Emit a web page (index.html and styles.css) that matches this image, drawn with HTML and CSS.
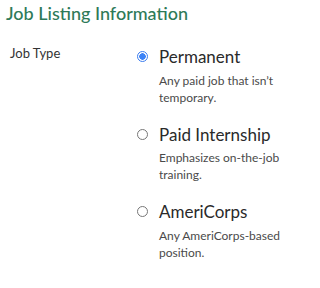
FILE: index.html
```html
<!DOCTYPE html>
<html>
<head>
<meta charset="utf-8">
<link rel="stylesheet" href="styles.css">
</head>
<body>
<h2 class="title">Job Listing Information</h2>
<div class="field">
  <div class="label">Job Type</div>
  <div class="options">
    <label class="option">
      <span class="radio checked"></span>
      <span class="text">
        <span class="name">Permanent</span>
        <span class="desc">Any paid job that isn’t temporary.</span>
      </span>
    </label>
    <label class="option">
      <span class="radio"></span>
      <span class="text">
        <span class="name">Paid Internship</span>
        <span class="desc">Emphasizes on-the-job training.</span>
      </span>
    </label>
    <label class="option">
      <span class="radio"></span>
      <span class="text">
        <span class="name">AmeriCorps</span>
        <span class="desc">Any AmeriCorps-based position.</span>
      </span>
    </label>
  </div>
</div>
</body>
</html>
```
FILE: styles.css
```css
body {
  margin: 0;
  background: #fff;
  font-family: "Lato", "Open Sans", sans-serif;
  color: #333;
}
.title {
  margin: 0;
  padding: 1px 0 0 6px;
  font-size: 18px;
  font-weight: 500;
  color: #2e7a58;
  line-height: 24px;
}
.field {
  display: flex;
  padding: 21px 0 0 10px;
}
.label {
  width: 127px;
  font-size: 13px;
  line-height: 14px;
  color: #333;
}
.options {
  display: flex;
  flex-direction: column;
  gap: 18px;
}
.option {
  display: flex;
  gap: 11px;
}
.radio {
  width: 11px;
  height: 11px;
  border: 1px solid #777;
  border-radius: 50%;
  margin-top: 5px;
  box-sizing: border-box;
  flex: none;
}
.radio.checked {
  border: 1px solid #3a7cf0;
  background: radial-gradient(circle, #3b82f6 0 3px, #fff 3.5px);
}
.text {
  display: flex;
  flex-direction: column;
  width: 126px;
}
.name {
  font-size: 17px;
  line-height: 22px;
  color: #2a2a2a;
}
.desc {
  margin-top: 3.5px;
  font-size: 12px;
  line-height: 17px;
  color: #4a4a4a;
}
```
